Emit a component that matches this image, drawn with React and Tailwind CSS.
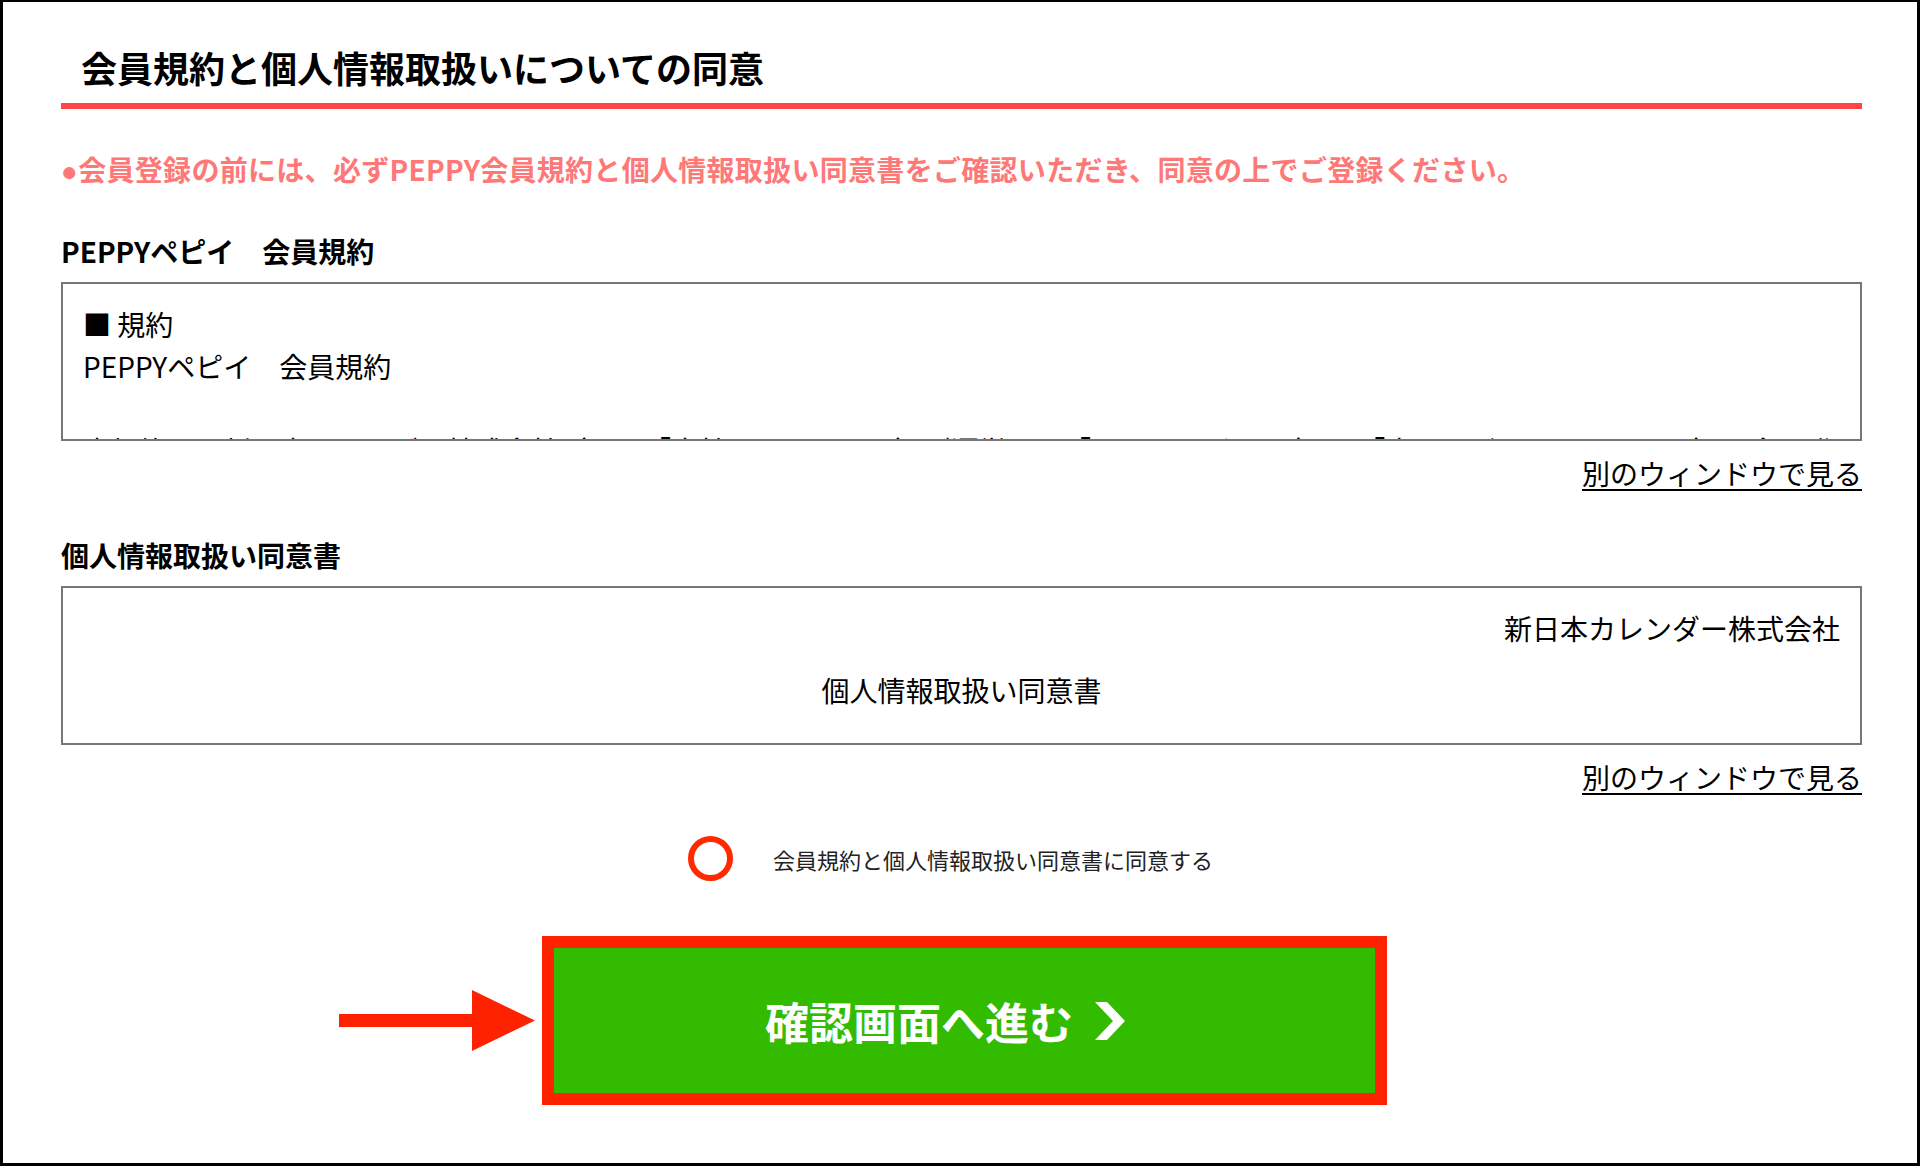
import { useState } from "react";

const termsText =
    "本規約は、新日本カレンダー株式会社（以下「当社」といいます）が運営する「PEPPYペピイ」（以下「本サービス」といいます）の会員登録及び利用条件について定めるものです。";

function Chevron() {
    return (
        <svg width="32" height="38" viewBox="0 0 32 38" className="shrink-0">
            <polygon points="1,0 13,0 31,19 13,38 1,38 19,19" fill="#ffffff" />
        </svg>
    );
}

function Arrow() {
    return (
        <svg width="196" height="61" viewBox="0 0 196 61">
            <rect x="0" y="24" width="138" height="13" fill="#ff2200" />
            <polygon points="133,0 196,30.5 133,61" fill="#ff2200" />
        </svg>
    );
}

export default function App() {
    const [agreed, setAgreed] = useState(false);

    return (
        <div className="w-[1920px] h-[1166px] bg-white border-black border-x-[3px] border-t-2 border-b-[3px] font-['Noto_Sans_CJK_JP','Liberation_Sans',sans-serif] text-black overflow-hidden">
            <div className="ml-[58px] w-[1801px]">
                {/* title */}
                <div className="pt-[41px] pb-[12px] pl-[20px] border-b-[6px] border-[#ff4545]">
                    <h1 className="text-[36px] leading-[48px] font-bold">会員規約と個人情報取扱いについての同意</h1>
                </div>

                <p className="mt-[40px] h-[40px] text-[28px] leading-[40px] font-bold text-[#ff7878] whitespace-nowrap tracking-[0.3px]">
                    <span className="font-['Liberation_Sans',sans-serif] leading-none">●</span>
                    会員登録の前には、必ずPEPPY会員規約と個人情報取扱い同意書をご確認いただき、同意の上でご登録ください。
                </p>

                {/* terms */}
                <h2 className="mt-[42px] text-[28px] leading-[40px] font-bold">PEPPYペピイ　会員規約</h2>
                <div className="mt-[11px] h-[159px] border-2 border-[#777777] overflow-hidden pt-[19px] px-[20px] text-[28px] leading-[42px]">
                    <p>■ 規約</p>
                    <p>PEPPYペピイ　会員規約</p>
                    <p>&nbsp;</p>
                    <p>{termsText}</p>
                </div>
                <div className="mt-[12px] text-right text-[28px] leading-[40px]">
                    <a href="#" className="underline underline-offset-[4px]">別のウィンドウで見る</a>
                </div>

                {/* privacy */}
                <h2 className="mt-[42px] text-[28px] leading-[40px] font-bold">個人情報取扱い同意書</h2>
                <div className="mt-[11px] h-[159px] border-2 border-[#777777] overflow-hidden pt-[19px] px-[20px] text-[28px] leading-[42px]">
                    <p className="text-right">新日本カレンダー株式会社</p>
                    <p className="mt-[20px] text-center">個人情報取扱い同意書</p>
                </div>
                <div className="mt-[12px] text-right text-[28px] leading-[40px]">
                    <a href="#" className="underline underline-offset-[4px]">別のウィンドウで見る</a>
                </div>

                {/* agree */}
                <label className="mt-[39px] pl-[627px] flex items-center gap-[40px] cursor-pointer">
                    <span
                        onClick={() => setAgreed(!agreed)}
                        className="w-[45px] h-[45px] rounded-full border-[6px] border-[#ff2a00] flex items-center justify-center shrink-0"
                    >
                        {agreed && <span className="w-[17px] h-[17px] rounded-full bg-[#ff2a00]"></span>}
                    </span>
                    <span className="text-[22px] leading-[30px] text-[#222222]">会員規約と個人情報取扱い同意書に同意する</span>
                </label>

                {/* submit */}
                <div className="relative mt-[55px] ml-[481px] w-[845px]">
                    <div className="absolute left-[-203px] top-[54px]">
                        <Arrow />
                    </div>
                    <button
                        type="button"
                        className="w-[845px] h-[169px] border-[12px] border-[#ff2200] bg-[#33bb00] flex items-center justify-center gap-[21px] pr-[38px]"
                    >
                        <span className="text-[44px] leading-[56px] font-bold text-white">確認画面へ進む</span>
                        <Chevron />
                    </button>
                </div>
            </div>
        </div>
    );
}
